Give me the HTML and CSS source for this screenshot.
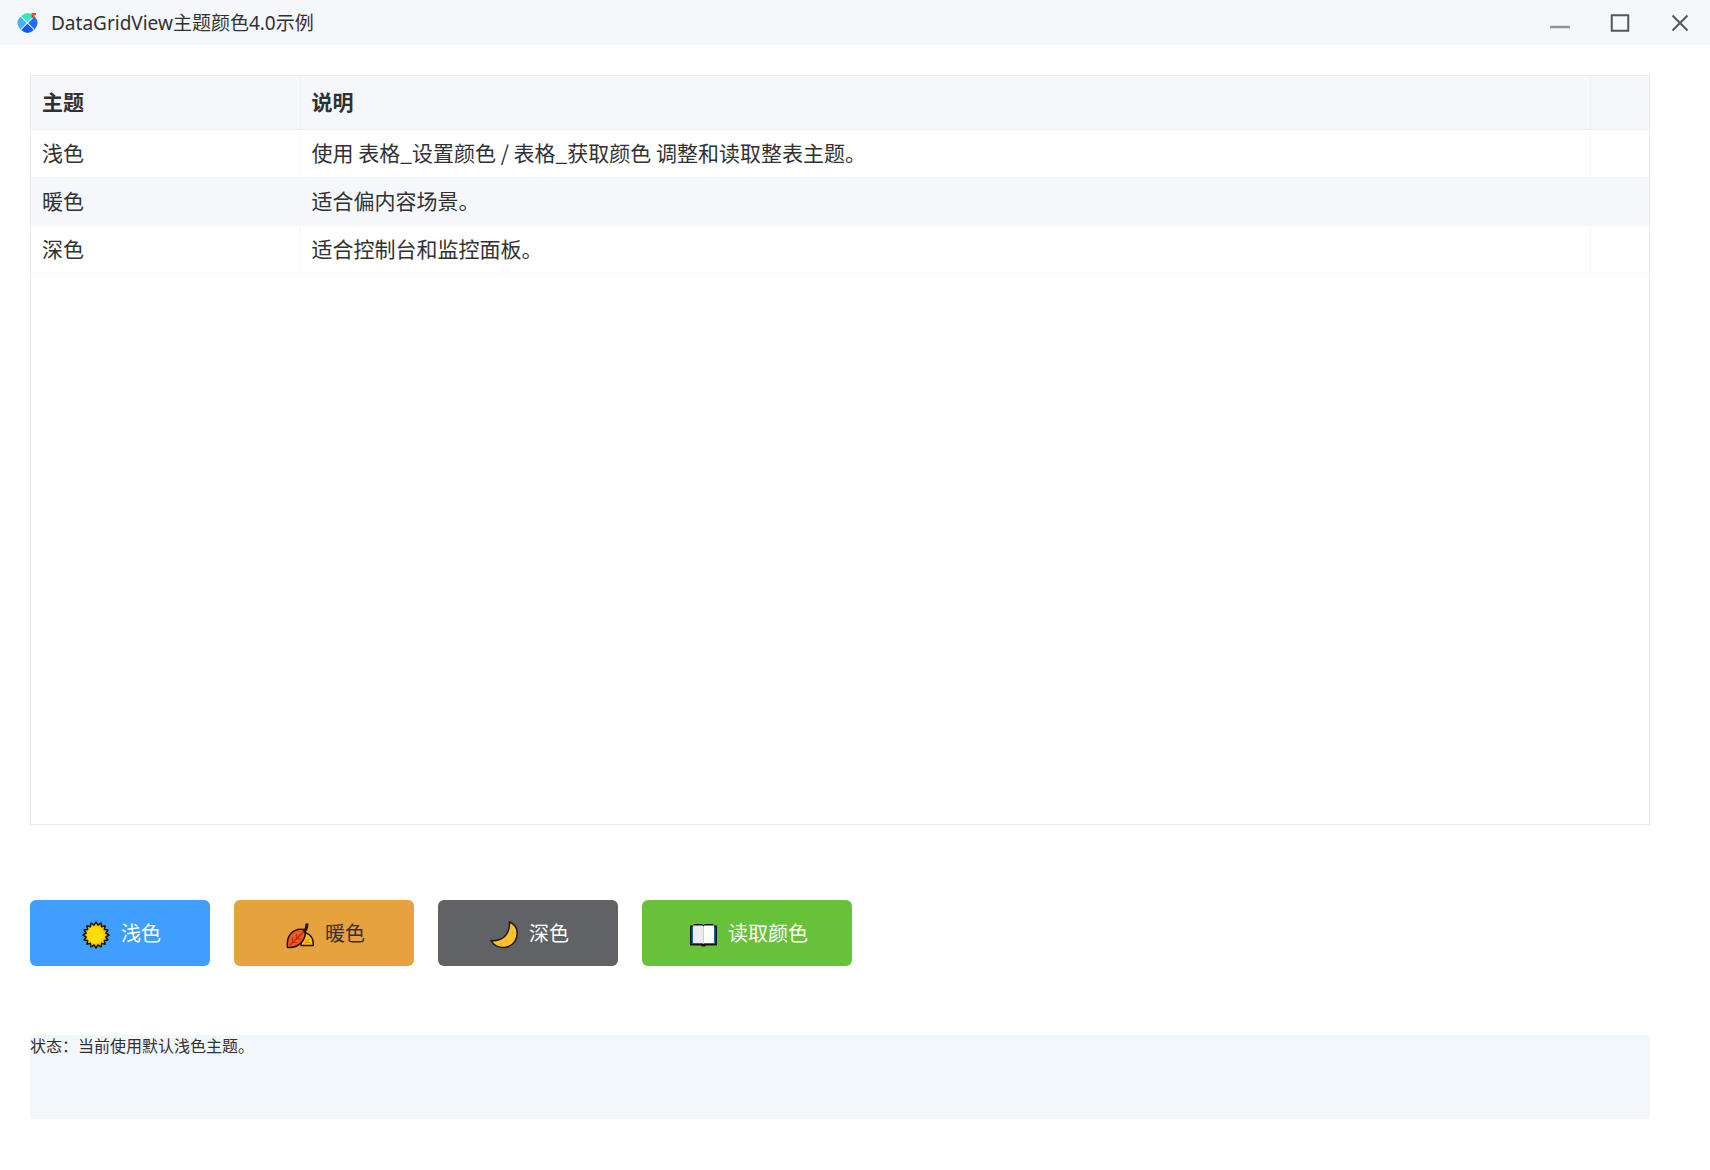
FILE: index.html
```html
<!DOCTYPE html>
<html lang="zh-CN">
<head>
    <meta charset="UTF-8">
    <meta name="viewport" content="width=device-width, initial-scale=1.0">
    <title>DataGridView主题颜色4.0示例</title>
    <link rel="stylesheet" href="styles.css">
</head>
<body>
    <header class="titlebar">
        <svg class="logo" viewBox="0 0 22 22" aria-hidden="true">
            <path fill="#2fe8bd" d="M10.500 10.200 L4.200 4 Q10.500 -2 16.800 4 Z"/>
            <path fill="#45b0fb" d="M9.800 11 L3.400 17.400 Q-2.600 11 3.400 4.600 Z"/>
            <path fill="#1f6dff" d="M11.200 11 L17.600 4.600 Q23.600 11 17.600 17.400 Z"/>
            <path fill="#0a5cff" d="M10.500 11.800 L16.800 18 Q10.500 24 4.200 18 Z"/>
            <path fill="#f5492f" d="M14.500 1 h4.500 v2 h-1.500 v3 h-3 z"/>
        </svg>
        <h1 class="title">DataGridView主题颜色4.0示例</h1>
        <div class="window-controls">
            <button type="button" class="window-btn" aria-label="最小化">
                <svg viewBox="0 0 20 20"><path stroke="#909296" stroke-width="2.500" d="M0 14h20"/></svg>
            </button>
            <button type="button" class="window-btn" aria-label="最大化">
                <svg viewBox="0 0 20 20"><path d="M1.750 2.250h16.500v15.500h-16.500z"/></svg>
            </button>
            <button type="button" class="window-btn" aria-label="关闭">
                <svg viewBox="0 0 20 20"><path d="M2.500 2.500l15 15M17.500 2.500l-15 15"/></svg>
            </button>
        </div>
    </header>

    <main class="content">
        <div class="grid">
            <table class="grid-table">
                <thead>
                    <tr>
                        <th scope="col" class="col-theme">主题</th>
                        <th scope="col">说明</th>
                        <td class="col-rest"></td>
                    </tr>
                </thead>
                <tbody>
                    <tr>
                        <td>浅色</td>
                        <td>使用 表格_设置颜色 / 表格_获取颜色 调整和读取整表主题。</td>
                        <td></td>
                    </tr>
                    <tr>
                        <td>暖色</td>
                        <td>适合偏内容场景。</td>
                        <td></td>
                    </tr>
                    <tr>
                        <td>深色</td>
                        <td>适合控制台和监控面板。</td>
                        <td></td>
                    </tr>
                </tbody>
            </table>
        </div>

        <div class="actions">
            <button type="button" class="btn btn-light">
                <svg class="icon" viewBox="0 0 28 28" aria-hidden="true">
                    <path fill="#ffc400" stroke="#1a1a10" stroke-width="1.500" stroke-linejoin="round" d="M27 14L23.800 16L26 19L22.300 19.600L23.200 23.200L19.600 22.300L19 26L16 23.800L14 27L12 23.800L9 26L8.400 22.300L4.800 23.200L5.700 19.600L2 19L4.200 16L1 14L4.200 12L2 9L5.700 8.400L4.800 4.800L8.400 5.700L9 2L12 4.200L14 1L16 4.200L19 2L19.600 5.700L23.200 4.800L22.300 8.400L26 9L23.800 12Z"/>
                    <circle cx="13.500" cy="14" r="8.500" fill="#ffdd00"/>
                </svg>
                浅色
            </button>
            <button type="button" class="btn btn-warm">
                <svg class="icon" viewBox="0 0 28 28" aria-hidden="true">
                    <path fill="#fdc010" stroke="#1c120c" stroke-width="1.500" stroke-linejoin="round" d="M15 24.500q1-9 5-12.500q8 3 7.200 12.500z"/>
                    <path fill="none" stroke="#e89005" stroke-width="1" d="M18 24l5-6M20 18v3.500h4"/>
                    <path fill="#ee5a1f" stroke="#1c120c" stroke-width="1.500" stroke-linejoin="round" d="M1.500 26.500Q.5 17 5 12.500Q10 7 18 8.500Q21 13 17 19.500Q12 27 1.500 26.500z"/>
                    <path fill="none" stroke="#b82a14" stroke-width="1.200" d="M4 24L18 10.500M10.500 13v5h5M6.500 16.500v5h5"/>
                    <path fill="none" stroke="#2a1210" stroke-width="3" d="M18 11q3-3 3-8.500"/>
                </svg>
                暖色
            </button>
            <button type="button" class="btn btn-dark">
                <svg class="icon" viewBox="0 0 28 28" aria-hidden="true">
                    <path fill="#ffc02e" stroke="#1c1a16" stroke-width="1.500" stroke-linejoin="round" d="M19.500 1Q27 4 27.200 12Q27 24 15 26.500Q5 27 1 19.500Q8 20.500 13.500 16.500Q20 11 19.500 1z"/>
                    <circle cx="22.500" cy="12" r="1" fill="#eda01e"/>
                    <circle cx="16" cy="20" r="1" fill="#eda01e"/>
                    <circle cx="11" cy="23" r="1" fill="#eda01e"/>
                </svg>
                深色
            </button>
            <button type="button" class="btn btn-read">
                <svg class="icon" viewBox="0 0 28 28" aria-hidden="true">
                    <path fill="#101418" d="M1 4.500h3l1-1.500h8l1.500 1 1.500-1h8l1 1.500h3v20H17l-1 1h-3l-1-1H1z"/>
                    <path fill="#1763a6" d="M2.500 6h24v17h-24z"/>
                    <path fill="#ececec" d="M4 4.500h9q1.500 0 1.500 1.500V23l-1-1H4z"/>
                    <path fill="#fff" d="M25 4.500h-9.500q-1 0-1 1.500V23l1-1H25z"/>
                </svg>
                读取颜色
            </button>
        </div>

        <p class="status">状态：当前使用默认浅色主题。</p>
    </main>
</body>
</html>
```
FILE: styles.css
```css
* {
    box-sizing: border-box;
}
body {
    margin: 0;
    min-height: 100vh;
    display: flex;
    flex-direction: column;
    font-family: "Noto Sans CJK SC", sans-serif;
    font-size: 20px;
    color: #303133;
    background: #fff;
}
.titlebar {
    display: flex;
    align-items: center;
    height: 45px;
    padding-left: 17px;
    background: #f5f7fa;
}
.logo {
    width: 22px;
    height: 22px;
}
.title {
    margin: 0 0 0 12px;
    font-family: "Noto Sans", "Noto Sans CJK SC", sans-serif;
    font-size: 19px;
    font-weight: normal;
    line-height: 28px;
}
.window-controls {
    display: flex;
    margin-left: auto;
}
.window-btn {
    display: flex;
    align-items: center;
    justify-content: center;
    width: 60px;
    height: 45px;
    padding: 0;
    border: none;
    background: none;
}
.window-btn:hover {
    background: #e4e7ed;
}
.window-btn svg {
    width: 20px;
    height: 20px;
    fill: none;
    stroke: #55575b;
    stroke-width: 2;
}
.content {
    flex: 1;
    display: flex;
    flex-direction: column;
    padding: 30px 60px 51px 30px;
}
.grid {
    flex: 1;
    border: 1px solid #e6e9ee;
}
.grid-table {
    width: 100%;
    table-layout: fixed;
    border-collapse: collapse;
    font-size: 21px;
    line-height: 28px;
}
.grid-table th,
.grid-table td {
    height: 48px;
    padding: 0 11px 3px;
    text-align: left;
    border-right: 1px solid #f4f6f9;
    border-bottom: 1px solid #f4f6f9;
}
.grid-table th:last-child,
.grid-table td:last-child {
    border-right: none;
}
.grid-table thead th,
.grid-table thead td {
    height: 53px;
    background: #f5f7fa;
    border-color: #edf0f5;
}
.grid-table tbody tr:nth-child(even) {
    background: #f5f7fa;
}
.grid-table .col-theme {
    width: 269px;
}
.grid-table .col-rest {
    width: 59px;
}
.actions {
    display: flex;
    gap: 24px;
    margin-top: 75px;
}
.btn {
    display: flex;
    align-items: center;
    justify-content: center;
    gap: 11px;
    width: 180px;
    height: 66px;
    padding: 0 0 1px 3px;
    border: none;
    border-radius: 6px;
    font-family: inherit;
    font-size: 20px;
    color: #fff;
    cursor: pointer;
}
.btn:hover {
    opacity: 0.9;
}
.icon {
    width: 28px;
    height: 28px;
    margin-top: 4px;
}
.btn-light {
    background: #409eff;
}
.btn-warm {
    background: #e6a23c;
    color: #303133;
}
.btn-dark {
    background: #606266;
}
.btn-read {
    width: 210px;
    background: #67c23a;
}
.status {
    height: 84px;
    margin: 69px 0 0;
    font-size: 16px;
    line-height: 20px;
    background: #f2f7fb;
}
```
